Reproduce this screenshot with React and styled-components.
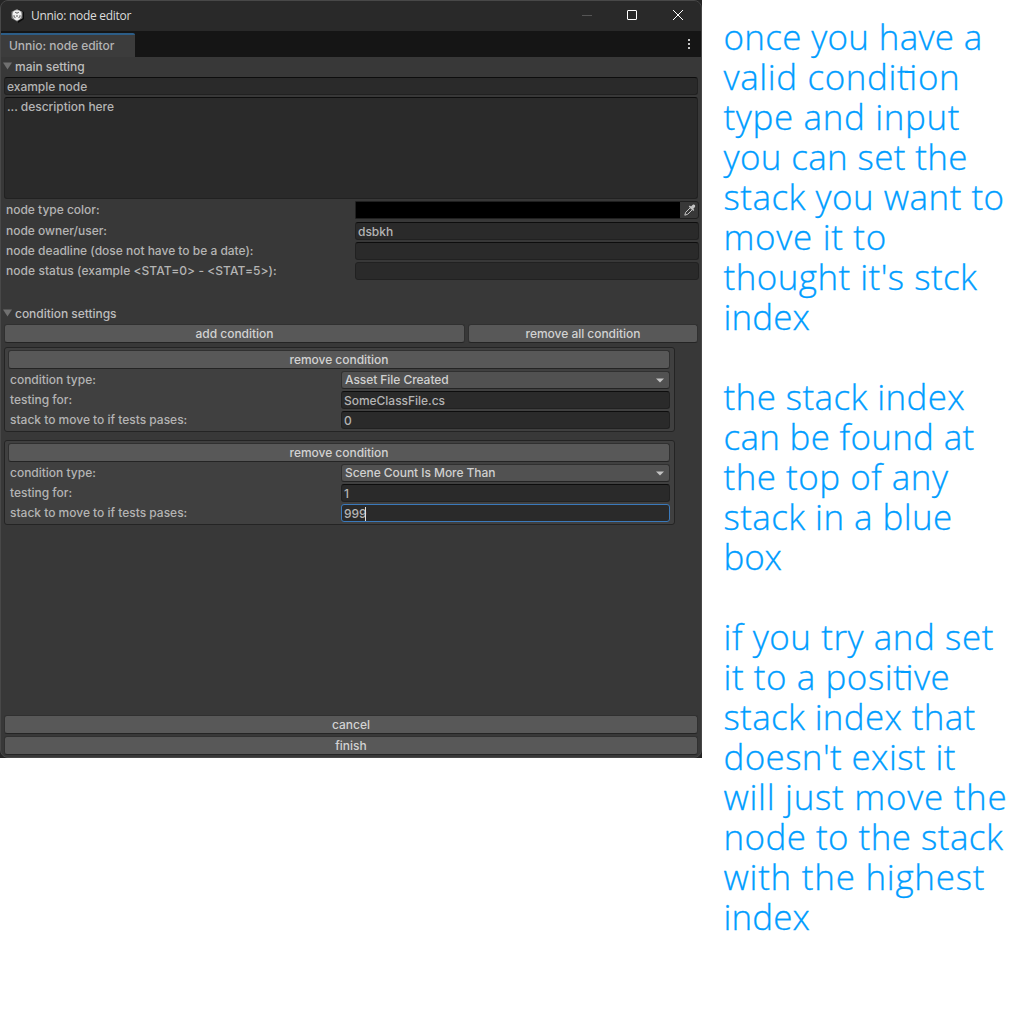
import React from "react";
import styled, { createGlobalStyle, css } from "styled-components";

const Global = createGlobalStyle`
  * { box-sizing: border-box; }
  body { margin: 0; background: #fff; }
`;

const Page = styled.main`
  display: flex;
  width: 1032px;
  height: 1032px;
  overflow: hidden;
  background: #fff;
`;

const WindowBackdrop = styled.div`
  width: 702px;
  height: 758px;
  flex: none;
  background: #252525;
`;

const Window = styled.section`
  display: flex;
  flex-direction: column;
  height: 758px;
  border: 1px solid #484848;
  border-radius: 8px;
  overflow: hidden;
  background: #383838;
  color: #b4b4b4;
  font: 500 12px/18px Inter, "Liberation Sans", sans-serif;
  letter-spacing: -0.03px;
  white-space: nowrap;
`;

const TitleBar = styled.header`
  display: flex;
  align-items: center;
  flex: none;
  height: 30px;
  padding-left: 9px;
  background: #292929;
`;

const Title = styled.span`
  flex: 1;
  margin-left: 6px;
  color: #dcdcdc;
  font: 400 12px/18px "Open Sans", "Noto Sans", sans-serif;
  letter-spacing: -0.29px;
`;

const WindowControls = styled.div`
  display: flex;
  height: 30px;
  svg { display: block; width: 46px; height: 30px; }
`;

const TabBar = styled.nav`
  display: flex;
  justify-content: space-between;
  align-items: flex-end;
  flex: none;
  height: 26px;
  background: #151515;
`;

const Tab = styled.div`
  width: 134px;
  height: 24px;
  padding: 2px 0 0 8px;
  border-top: 2px solid #2c5d87;
  border-radius: 0 2px 0 0;
  background: #3c3c3c;
`;

const Body = styled.div`
  display: flex;
  flex-direction: column;
  flex: 1;
  padding: 0 3px 2px;
`;

const Foldout = styled.div`
  display: flex;
  align-items: center;
  height: 18px;
  margin-top: ${(p) => p.$top || 0}px;
  margin-bottom: 2px;
  gap: 2px;
  color: #bdbdbd;
  line-height: 19px;
  svg { flex: none; margin-left: -1px; }
`;

const fieldLook = css`
  border: 1px solid #212121;
  border-top-color: #0d0d0d;
  border-radius: 3px;
  background: #2a2a2a;
`;

const Field = styled.div`
  ${fieldLook}
  display: flex;
  align-items: center;
  height: ${(p) => p.$height || 18}px;
  padding: 2px 2px 0;
  ${(p) => p.$multi && css`align-items: flex-start; padding-top: 0;`}
  ${(p) => p.$quiet && css`border-top-color: #212121;`}
  ${(p) => p.$focused && css`border-color: #3a79bb;`}
`;

const Caret = styled.i`
  width: 1px;
  height: 14px;
  margin: -1px 0 0 -2px;
  background: #e0e0e0;
`;

const Stack = styled.div`
  display: flex;
  flex-direction: column;
  gap: 2px;
`;

const PropertyGrid = styled.div`
  display: grid;
  grid-template-columns: 351px 344px;
  grid-template-rows: 19px repeat(3, 18px);
  row-gap: 2px;
  margin-top: 2px;
`;

const Label = styled.label`
  padding-left: 2px;
  line-height: 18px;
  letter-spacing: ${(p) => p.$tracking || -0.01}px;
`;

const ColorField = styled.div`
  display: flex;
  height: 18px;
  border: 1px solid #202020;
  border-radius: 0 3px 3px 0;
  background: #383838;
`;

const Swatch = styled.div`
  flex: 1;
  background: #000;
`;

const ButtonRow = styled.div`
  display: grid;
  grid-template-columns: 461px 230px;
  gap: 3px;
`;

const Button = styled.button`
  display: block;
  width: 100%;
  height: 19px;
  padding: 0;
  border: 1px solid #303030;
  border-bottom-color: #242424;
  border-radius: 3px;
  background: #585858;
  color: #d2d2d2;
  font: inherit;
  letter-spacing: inherit;
  line-height: 17px;
`;

const ConditionBox = styled.div`
  width: 671px;
  height: 85px;
  margin-top: ${(p) => p.$top}px;
  padding: 2px 4px 2px 3px;
  border: 1px solid #242424;
  border-radius: 3px;
  background: #404040;
`;

const ConditionGrid = styled.div`
  display: grid;
  grid-template-columns: 333px 329px;
  grid-auto-rows: 18px;
  row-gap: 2px;
  margin-top: 2px;
`;

const Dropdown = styled.div`
  display: flex;
  align-items: center;
  justify-content: space-between;
  height: 18px;
  padding: 0 5px 0 3px;
  border: 1px solid #303030;
  border-bottom-color: #242424;
  border-radius: 3px;
  background: #515151;
  color: #d0d0d0;
  letter-spacing: -0.06px;
`;

const Footer = styled.footer`
  display: flex;
  flex-direction: column;
  gap: 2px;
  margin-top: auto;
`;

const Notes = styled.aside`
  padding: 17px 0 0 21.5px;
  color: #009dff;
  font: 300 35px/40px "Open Sans", "Noto Sans", sans-serif;
  -webkit-text-stroke: 0.3px #009dff;
  white-space: nowrap;
`;

const NoteLine = styled.div`
  height: 40px;
  width: max-content;
  letter-spacing: ${(p) => p.$tracking}px;
`;

const Ligature = styled.span`
  position: relative;
  &::after {
    content: "";
    position: absolute;
    left: 8px;
    right: 5px;
    top: 18px;
    height: 2px;
    background: #009dff;
  }
`;

const UnityIcon = () => (
  <svg width="15" height="16" viewBox="0 0 15 16">
    <path d="M8 1 14 4 14 11 8 15z" fill="#090909" />
    <path d="M7 1 12.500 3.800v6.500L7 13.500 1.500 10.300V3.800z" fill="#858585" />
    <path d="M7 2.200c3 0 4.500 1.500 4.500 4.200 0 2.900-1.500 5.300-4.500 6-3-.7-4.500-3.100-4.500-6 0-2.700 1.500-4.200 4.500-4.200z" fill="#f2f2f2" />
    <path d="m5.200 4.300 1.800.9 1.800-.9M4 7.200v1.600l1.500.8M10 7.200v1.600l-1.500.8M7 7v2" fill="none" stroke="#555" />
  </svg>
);

const Triangle = () => (
  <svg width="10" height="8" viewBox="0 0 10 8"><path d="M0 .5h9L4.500 7.5z" fill="#707070" /></svg>
);

const Eyedropper = () => (
  <svg width="18" height="16" viewBox="0 0 18 16">
    <path d="m4.8 13.2.9-2.9 4.6-4.6 2 2-4.6 4.6z" fill="none" stroke="#c4c4c4" />
    <path d="m8.800 4.400 1-1 1.200 1 1.800-1.700c1.600-.7 2.900.6 2.200 2.200l-1.700 1.800 1 1.200-1 1z" fill="#c4c4c4" />
  </svg>
);

const conditions = [
  { type: "Asset File Created", test: "SomeClassFile.cs", stack: "0" },
  { type: "Scene Count Is More Than", test: "1", stack: "999", focused: true },
];

const notes = [
  ["once you have a", 0.3], ["valid condition", 0.6], ["type and input", 0.62],
  ["you can set the", 0.35], ["stack you want to", 0.47], ["move it to", 0.66],
  ["thought it's stck", 0.44], ["index", 0.1], ["", 0],
  ["the stack index", 0.38], ["can be found at", 0.29], ["the top of any", 0.48],
  ["stack in a blue", 0.4], ["box", -0.2], ["", 0],
  ["if you try and set", 0.54], ["it to a positive", 0.54], ["stack index that", 0.32],
  ["doesn't exist it", 0.37], ["will just move the", 0.7], ["node to the stack", 0.43],
  ["with the highest", 0.73], ["index", 0.1],
];

const NoteText = ({ text }) => {
  const [before, after] = text.split("ti");
  return after === undefined ? text : <>{before}<Ligature>ti</Ligature>{after}</>;
};

const Condition = ({ item, top }) => (
  <ConditionBox $top={top}>
    <Button>remove condition</Button>
    <ConditionGrid>
      <Label>condition type:</Label>
      <Dropdown>
        {item.type}
        <svg width="8" height="5" viewBox="0 0 8 5"><path d="M0 .5h8l-4 4z" fill="#c4c4c4" /></svg>
      </Dropdown>
      <Label>testing for:</Label>
      <Field>{item.test}</Field>
      <Label>stack to move to if tests pases:</Label>
      <Field $focused={item.focused}>{item.stack}{item.focused && <Caret />}</Field>
    </ConditionGrid>
  </ConditionBox>
);

export default function App() {
  return (
    <Page>
      <Global />
      <WindowBackdrop>
        <Window>
          <TitleBar>
            <UnityIcon />
            <Title>Unnio: node editor</Title>
            <WindowControls>
              <svg viewBox="0 0 46 30"><path d="M19 14.5h10" stroke="#555" /></svg>
              <svg viewBox="0 0 46 30"><rect x="18.5" y="9.5" width="9" height="9" rx=".5" fill="none" stroke="#fff" /></svg>
              <svg viewBox="0 0 46 30"><path d="m18 9 10 10m0-10L18 19" stroke="#fff" /></svg>
            </WindowControls>
          </TitleBar>
          <TabBar>
            <Tab>Unnio: node editor</Tab>
            <svg width="24" height="26" viewBox="0 0 24 26"><path d="M11 8h2v2h-2zm0 4h2v2h-2zm0 4h2v2h-2z" fill="#c4c4c4" /></svg>
          </TabBar>
          <Body>
            <Foldout><Triangle />main setting</Foldout>
            <Stack>
              <Field>example node</Field>
              <Field $height={102} $multi>... description here</Field>
            </Stack>
            <PropertyGrid>
              <Label>node type color:</Label>
              <ColorField><Swatch /><Eyedropper /></ColorField>
              <Label>node owner/user:</Label>
              <Field>dsbkh</Field>
              <Label>node deadline (dose not have to be a date):</Label>
              <Field />
              <Label $tracking={0.05}>{"node status (example <STAT=0> - <STAT=5>):"}</Label>
              <Field $quiet />
            </PropertyGrid>
            <Foldout $top={24}><Triangle />condition settings</Foldout>
            <ButtonRow>
              <Button>add condition</Button>
              <Button>remove all condition</Button>
            </ButtonRow>
            <Condition item={conditions[0]} top={4} />
            <Condition item={conditions[1]} top={8} />
            <Footer>
              <Button>cancel</Button>
              <Button>finish</Button>
            </Footer>
          </Body>
        </Window>
      </WindowBackdrop>
      <Notes>
        {notes.map(([line, tracking], i) => (
          <NoteLine key={i} $tracking={tracking}><NoteText text={line} /></NoteLine>
        ))}
      </Notes>
    </Page>
  );
}
